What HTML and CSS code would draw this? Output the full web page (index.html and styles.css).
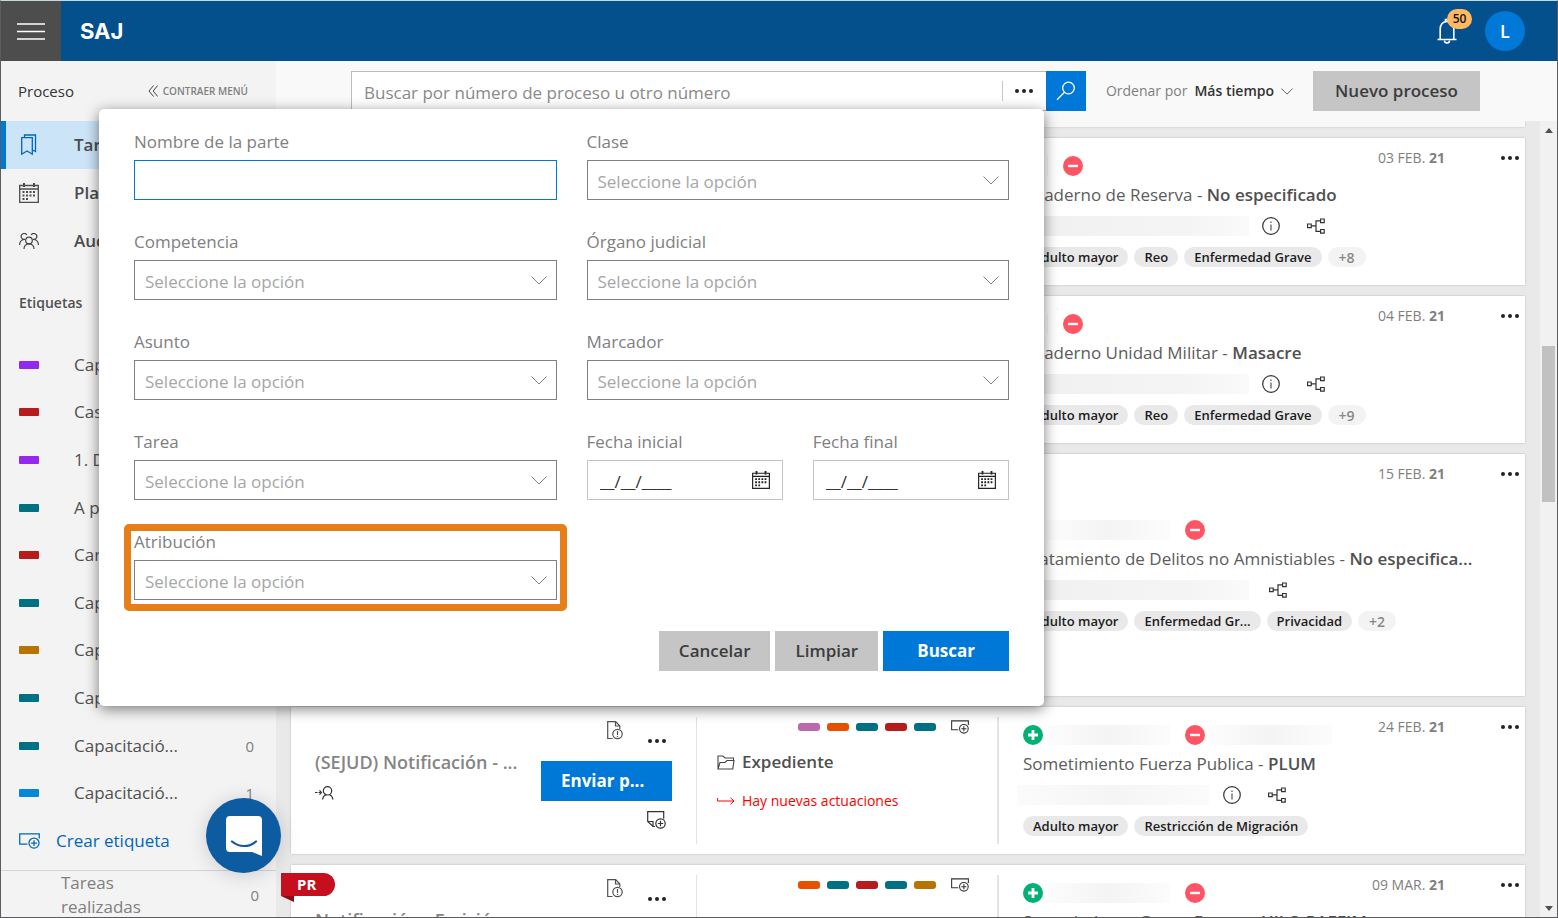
FILE: index.html
```html
<!DOCTYPE html>
<html lang="es">
<head>
<meta charset="utf-8">
<meta name="viewport" content="width=device-width, initial-scale=1">
<title>SAJ</title>
<link rel="stylesheet" href="styles.css">
</head>
<body>
<svg class="sprite" aria-hidden="true">
  <symbol id="i-dots" viewBox="0 0 18 4"><circle cx="2" cy="2" r="2"/><circle cx="9" cy="2" r="2"/><circle cx="16" cy="2" r="2"/></symbol>
  <symbol id="i-chevron" viewBox="0 0 16 9"><path d="M.5.5 8 8 15.500.5" fill="none" stroke="currentColor"/></symbol>
  <symbol id="i-calendar" viewBox="0 0 20 20"><path d="M.7 2.500h18.600v16.800H.7zM.7 6h18.600" fill="none" stroke="currentColor" stroke-width="1.300"/><path d="M4 0h2v4H4zM14 0h2v4h-2zM7 8h2v2H7zm3.500 0h2v2h-2zM14 8h2v2h-2zM3.500 8h2v2h-2zm0 3.500h2v2h-2zm3.500 0h2v2H7zm3.500 0h2v2h-2zm3.500 0h2v2h-2zM3.500 15h2v2h-2zM7 15h2v2H7z" fill="currentColor"/></symbol>
  <symbol id="i-minus" viewBox="0 0 20 20"><circle cx="10" cy="10" r="10" fill="#ff5464"/><path d="M5 10h10" stroke="#fff" stroke-width="2.400"/></symbol>
  <symbol id="i-plus" viewBox="0 0 20 20"><circle cx="10" cy="10" r="10" fill="#00b074"/><path d="M5 10h10M10 5v10" stroke="#fff" stroke-width="2.800"/></symbol>
  <symbol id="i-info" viewBox="0 0 18 18"><circle cx="9" cy="9" r="8.300" fill="none" stroke="currentColor" stroke-width="1.200"/><path d="M9 7.500v6M9 4.500v1.500" stroke="currentColor"/></symbol>
  <symbol id="i-tree" viewBox="0 0 18 16"><path d="M.6 6h3.600v3.600H.6zM13.600 1h3.600v3.600h-3.600zM13.600 11.500h3.600v3.600h-3.600zM4.200 7.800H9M13.600 2.800H9v10.500h4.600" fill="none" stroke="currentColor" stroke-width="1.200"/></symbol>
  <symbol id="i-doc" viewBox="0 0 16 19"><path d="M5.500 17.500H.7V.7h8L12.800 5v3M8.500.7V5h4.300" fill="none" stroke="currentColor" stroke-width="1.200"/><circle cx="10.500" cy="13" r="4.700" fill="none" stroke="currentColor" stroke-width="1.200"/><path d="M10.500 10v4M10.500 15v1" stroke="currentColor" stroke-width="1.200"/></symbol>
  <symbol id="i-note" viewBox="0 0 19 18"><path d="M8 15.500H6L.7 10.500V.7h16v7M.7 10.500H6v5" fill="none" stroke="currentColor" stroke-width="1.200"/><circle cx="13.500" cy="12.500" r="4.700" fill="none" stroke="currentColor" stroke-width="1.200"/><path d="M10.800 12.500h5.400M13.500 9.800v5.400" stroke="currentColor" stroke-width="1.200"/></symbol>
  <symbol id="i-tag" viewBox="0 0 20 15"><path d="M8 10.500H.7V.7h18.600v4.500" fill="none" stroke="currentColor" stroke-width="1.200"/><circle cx="14.300" cy="9.500" r="4.800" fill="none" stroke="currentColor" stroke-width="1.200"/><path d="M11.500 9.500h5.600M14.300 6.700v5.600" stroke="currentColor" stroke-width="1.200"/></symbol>
</svg>

<header class="topbar">
  <button class="menu-btn" aria-label="Menú"><svg width="28" height="17" viewBox="0 0 28 17"><path d="M0 1h28M0 8.500h28M0 16h28" stroke="#fff" stroke-width="1.600"/></svg></button>
  <span class="logo">SAJ</span>
  <button class="bell" aria-label="Notificaciones">
    <svg width="20" height="26" viewBox="0 0 20 26"><path d="M.5 21.500h19M3.200 21.500V11C3.200 6.500 6 3.500 10 3.500s6.800 3 6.800 7.500v10.500M8.500 3.500V1.500h3v2" fill="none" stroke="#fff" stroke-width="1.600"/><path d="M7.500 22.500a2.500 2.500 0 0 0 5 0" fill="none" stroke="#fff" stroke-width="1.600"/></svg>
    <span class="badge">50</span>
  </button>
  <button class="avatar">L</button>
</header>

<div class="shell">
  <aside class="sidebar">
    <div class="side-head">
      <span>Proceso</span>
      <button class="collapse"><svg width="10" height="12" viewBox="0 0 10 12"><path d="M5.500.5 1 6l4.500 5.500M9.700.5 5.200 6l4.500 5.500" fill="none" stroke="#444"/></svg>CONTRAER MENÚ</button>
    </div>
    <nav class="side-nav">
      <a class="active" href="#"><svg width="20" height="22" viewBox="0 0 20 22"><path d="M2.700 3.700h10.600v16.500L8 17l-5.300 3.200zM5.500 3.500V1h11v16.500l-3-1.500" fill="none" stroke="#0067b8" stroke-width="1.300"/></svg>Tareas</a>
      <a href="#"><svg width="20" height="20"><use href="#i-calendar"/></svg>Plazos</a>
      <a href="#"><svg width="20" height="17" viewBox="0 0 20 17"><g fill="none" stroke="#444" stroke-width="1.200"><circle cx="10" cy="7.500" r="3.300"/><path d="M5 16c0-3 2.200-5.200 5-5.200s5 2.200 5 5.200"/><path d="M6 6.300A3 3 0 1 1 7.800 2M14 6.300A3 3 0 1 0 12.200 2M.6 12c0-2.800 1.700-5 4.400-5.500M19.400 12c0-2.800-1.700-5-4.400-5.500"/></g></svg>Audiencias</a>
    </nav>
    <h2 class="side-title">Etiquetas</h2>
    <ul class="tags">
      <li><i class="swatch violet"></i><span>Capacitación</span></li>
      <li><i class="swatch red"></i><span>Casos</span></li>
      <li><i class="swatch violet"></i><span>1. Derecho</span></li>
      <li><i class="swatch teal"></i><span>A prueba</span></li>
      <li><i class="swatch red"></i><span>Carpeta</span></li>
      <li><i class="swatch teal"></i><span>Capacitació...</span></li>
      <li><i class="swatch ochre"></i><span>Capacitació...</span></li>
      <li><i class="swatch teal"></i><span>Capacitació...</span></li>
      <li><i class="swatch teal"></i><span>Capacitació...</span><b>0</b></li>
      <li><i class="swatch blue"></i><span>Capacitació...</span><b>1</b></li>
    </ul>
    <a class="create" href="#"><svg width="21" height="16"><use href="#i-tag"/></svg>Crear etiqueta</a>
    <div class="side-foot"><span>Tareas<br>realizadas</span><b>0</b></div>
  </aside>

  <main class="content">
    <div class="toolbar">
      <form class="search">
        <input type="text" aria-label="Buscar" placeholder="Buscar por número de proceso u otro número">
        <button type="button" class="more" aria-label="Más filtros"><svg width="18" height="4"><use href="#i-dots"/></svg></button>
        <button type="button" class="go" aria-label="Buscar"><svg width="20" height="20" viewBox="0 0 20 20"><circle cx="12.500" cy="7" r="5.800" fill="none" stroke="#fff" stroke-width="1.300"/><path d="M8.500 11.200 1 18.800" stroke="#fff" stroke-width="1.300"/></svg></button>
      </form>
      <button class="sort"><span>Ordenar por</span> <strong>Más tiempo</strong><svg width="12" height="7"><use href="#i-chevron"/></svg></button>
      <button class="btn new">Nuevo proceso</button>
    </div>

    <div class="board">
      <div class="list">
        <article class="card stub"></article>

        <article class="card">
          <section class="task"></section>
          <section class="file"></section>
          <section class="info">
            <div class="details">
              <div class="row parties"><svg width="20" height="20"><use href="#i-plus"/></svg><span class="redact none"></span><svg width="20" height="20"><use href="#i-minus"/></svg></div>
              <h3>Cuaderno de Reserva - <b>No especificado</b></h3>
              <div class="row ids"><span class="redact id"></span><svg width="18" height="18"><use href="#i-info"/></svg><svg width="18" height="16"><use href="#i-tree"/></svg></div>
              <div class="row pills"><span>Adulto mayor</span><span>Reo</span><span>Enfermedad Grave</span><em>+8</em></div>
            </div>
            <div class="corner"><time>03 FEB. <b>21</b></time><button aria-label="Más"><svg width="18" height="4"><use href="#i-dots"/></svg></button></div>
          </section>
        </article>

        <article class="card">
          <section class="task"></section>
          <section class="file"></section>
          <section class="info">
            <div class="details">
              <div class="row parties"><svg width="20" height="20"><use href="#i-plus"/></svg><span class="redact none"></span><svg width="20" height="20"><use href="#i-minus"/></svg></div>
              <h3>Cuaderno Unidad Militar - <b>Masacre</b></h3>
              <div class="row ids"><span class="redact id"></span><svg width="18" height="18"><use href="#i-info"/></svg><svg width="18" height="16"><use href="#i-tree"/></svg></div>
              <div class="row pills"><span>Adulto mayor</span><span>Reo</span><span>Enfermedad Grave</span><em>+9</em></div>
            </div>
            <div class="corner"><time>04 FEB. <b>21</b></time><button aria-label="Más"><svg width="18" height="4"><use href="#i-dots"/></svg></button></div>
          </section>
        </article>

        <article class="card tall">
          <section class="task"></section>
          <section class="file"></section>
          <section class="info">
            <div class="details">
              <div class="row parties"><svg width="20" height="20"><use href="#i-plus"/></svg><span class="redact"></span><svg width="20" height="20"><use href="#i-minus"/></svg></div>
              <h3>Tratamiento de Delitos no Amnistiables - <b>No especifica...</b></h3>
              <div class="row ids"><span class="redact id wide"></span><svg width="18" height="16"><use href="#i-tree"/></svg></div>
              <div class="row pills"><span>Adulto mayor</span><span>Enfermedad Gr...</span><span>Privacidad</span><em>+2</em></div>
            </div>
            <div class="corner"><time>15 FEB. <b>21</b></time><button aria-label="Más"><svg width="18" height="4"><use href="#i-dots"/></svg></button></div>
          </section>
        </article>

        <article class="card">
          <section class="task">
            <div class="task-text">
              <h3>(SEJUD) Notificación - ...</h3>
              <svg width="19" height="14" viewBox="0 0 19 14"><g fill="none" stroke="#333" stroke-width="1.200"><path d="M0 6.500h2.500M3.500 6.500h2M4.500 4.300l2 2.200-2 2.200"/><circle cx="12.500" cy="4.800" r="4.200"/><path d="M7.500 13.500c.4-2.500 1.800-4 3.500-4.700M18 13.500c-.4-2.500-1.800-4-3.500-4.700"/></g></svg>
            </div>
            <div class="task-side">
              <div class="task-icons"><svg width="16" height="19"><use href="#i-doc"/></svg><button aria-label="Más"><svg width="18" height="4"><use href="#i-dots"/></svg></button></div>
              <button class="btn primary send">Enviar p...</button>
              <svg class="note" width="19" height="18"><use href="#i-note"/></svg>
            </div>
          </section>
          <section class="file">
            <div class="chips"><i class="pink"></i><i class="orange"></i><i class="teal"></i><i class="red"></i><i class="teal"></i><svg width="18" height="14"><use href="#i-tag"/></svg></div>
            <a class="expediente" href="#"><svg width="18" height="15" viewBox="0 0 18 15"><path d="M1 14V1h5l2 2h8.500v2.500M1 14l2-6.500h5l2-2h7L15.800 14z" fill="none" stroke="#444" stroke-width="1.100"/></svg>Expediente</a>
            <a class="news" href="#"><svg width="18" height="8" viewBox="0 0 18 8"><path d="M.6 1v3H17M13.500.8 17 4l-3.500 3.200" fill="none" stroke="#f00"/></svg>Hay nuevas actuaciones</a>
          </section>
          <section class="info">
            <div class="details">
              <div class="row parties"><svg width="20" height="20"><use href="#i-plus"/></svg><span class="redact"></span><svg width="20" height="20"><use href="#i-minus"/></svg><span class="redact"></span></div>
              <h3>Sometimiento Fuerza Publica - <b>PLUM</b></h3>
              <div class="row ids"><span class="redact id short"></span><svg width="18" height="18"><use href="#i-info"/></svg><svg width="18" height="16"><use href="#i-tree"/></svg></div>
              <div class="row pills"><span>Adulto mayor</span><span>Restricción de Migración</span></div>
            </div>
            <div class="corner"><time>24 FEB. <b>21</b></time><button aria-label="Más"><svg width="18" height="4"><use href="#i-dots"/></svg></button></div>
          </section>
        </article>

        <article class="card">
          <span class="ribbon">PR</span>
          <section class="task">
            <div class="task-text"><h3>Notificación - Emisió...</h3></div>
            <div class="task-side">
              <div class="task-icons"><svg width="16" height="19"><use href="#i-doc"/></svg><button aria-label="Más"><svg width="18" height="4"><use href="#i-dots"/></svg></button></div>
              <button class="btn primary send">Enviar p...</button>
              <svg class="note" width="19" height="18"><use href="#i-note"/></svg>
            </div>
          </section>
          <section class="file">
            <div class="chips"><i class="orange"></i><i class="teal"></i><i class="red"></i><i class="teal"></i><i class="ochre"></i><svg width="18" height="14"><use href="#i-tag"/></svg></div>
          </section>
          <section class="info">
            <div class="details">
              <div class="row parties"><svg width="20" height="20"><use href="#i-plus"/></svg><span class="redact"></span><svg width="20" height="20"><use href="#i-minus"/></svg></div>
              <h3>Sometimiento Grupo Fuerza - <b>UJLO PAEFIM...</b></h3>
              <div class="row ids"></div>
              <div class="row pills"></div>
            </div>
            <div class="corner"><time>09 MAR. <b>21</b></time><button aria-label="Más"><svg width="18" height="4"><use href="#i-dots"/></svg></button></div>
          </section>
        </article>
      </div>
      <div class="scroll" aria-hidden="true"><i class="up"></i><i class="thumb"></i><i class="down"></i></div>
    </div>
  </main>
</div>

<form class="filters">
  <div class="fields">
    <div class="field"><label for="nombre">Nombre de la parte</label><input id="nombre" class="focus" type="text"></div>
    <div class="field"><label for="clase">Clase</label><div class="pick"><select id="clase"><option>Seleccione la opción</option></select><svg width="16" height="9"><use href="#i-chevron"/></svg></div></div>
    <div class="field"><label for="competencia">Competencia</label><div class="pick"><select id="competencia"><option>Seleccione la opción</option></select><svg width="16" height="9"><use href="#i-chevron"/></svg></div></div>
    <div class="field"><label for="organo">Órgano judicial</label><div class="pick"><select id="organo"><option>Seleccione la opción</option></select><svg width="16" height="9"><use href="#i-chevron"/></svg></div></div>
    <div class="field"><label for="asunto">Asunto</label><div class="pick"><select id="asunto"><option>Seleccione la opción</option></select><svg width="16" height="9"><use href="#i-chevron"/></svg></div></div>
    <div class="field"><label for="marcador">Marcador</label><div class="pick"><select id="marcador"><option>Seleccione la opción</option></select><svg width="16" height="9"><use href="#i-chevron"/></svg></div></div>
    <div class="field"><label for="tarea">Tarea</label><div class="pick"><select id="tarea"><option>Seleccione la opción</option></select><svg width="16" height="9"><use href="#i-chevron"/></svg></div></div>
    <div class="dates">
      <div class="field"><label for="inicio">Fecha inicial</label><div class="pick date"><input id="inicio" type="text" value="__/__/____"><svg width="18" height="18"><use href="#i-calendar"/></svg></div></div>
      <div class="field"><label for="fin">Fecha final</label><div class="pick date"><input id="fin" type="text" value="__/__/____"><svg width="18" height="18"><use href="#i-calendar"/></svg></div></div>
    </div>
    <div class="field highlight"><label for="atribucion">Atribución</label><div class="pick"><select id="atribucion"><option>Seleccione la opción</option></select><svg width="16" height="9"><use href="#i-chevron"/></svg></div></div>
  </div>
  <div class="actions">
    <button type="button" class="btn">Cancelar</button>
    <button type="button" class="btn">Limpiar</button>
    <button type="button" class="btn primary find">Buscar</button>
  </div>
</form>

<button class="chat" aria-label="Chat"><svg width="36" height="40" viewBox="0 0 36 40"><path d="M4 0h28a4 4 0 0 1 4 4v36l-10-4H4a4 4 0 0 1-4-4V4a4 4 0 0 1 4-4z" fill="#fff"/><path d="M6 25.500c7 6 17 6 24 0" fill="none" stroke="#0d5ba1" stroke-width="2.200" stroke-linecap="round"/></svg></button>
</body>
</html>
```
FILE: styles.css
```css
* { box-sizing: border-box; }

body {
  margin: 0;
  height: 100vh;
  display: flex;
  flex-direction: column;
  position: relative;
  overflow: hidden;
  border: 1px solid #5c5c5e;
  border-top-color: #c9d8dc;
  font-family: "Open Sans", "Noto Sans", sans-serif;
  font-size: 17px;
  line-height: 24px;
  color: #505050;
  background: #f3f3f3;
}

button, input, select { font: inherit; color: inherit; border: 0; border-radius: 0; padding: 0; background: none; }
a { color: inherit; text-decoration: none; }
h2, h3, ul { margin: 0; padding: 0; font-size: inherit; font-weight: 400; }
svg { flex: none; display: block; }
.sprite { position: absolute; width: 0; height: 0; }

/* Top bar */
.topbar { display: flex; align-items: center; height: 60px; flex: none; background: #04508c; padding-right: 32px; }
.menu-btn { width: 60px; height: 60px; background: #4d4d4d; display: grid; place-items: center; }
.logo { margin: 0 auto 0 19px; font: 700 22px/24px Inter, sans-serif; color: #fff; }
.bell { position: relative; margin-right: 28px; }
.badge { position: absolute; top: -9px; left: 10px; min-width: 25px; height: 20px; border-radius: 10px; background: #ffb961; color: #111; font-size: 12px; line-height: 20px; font-weight: 600; text-align: center; }
.avatar { width: 40px; height: 40px; border-radius: 50%; background: #0078d7; color: #fff; font-weight: 600; font-size: 18px; }

.shell { flex: 1; min-height: 0; display: flex; }

/* Sidebar */
.sidebar { width: 275px; flex: none; display: flex; flex-direction: column; }
.side-head { height: 60px; display: flex; align-items: center; justify-content: space-between; padding: 0 28px 0 17px; font-size: 15px; color: #333; }
.collapse { display: flex; align-items: center; gap: 5px; font-size: 10px; font-weight: 600; color: #808080; }
.side-nav a { height: 48px; display: flex; align-items: center; gap: 35px; padding-left: 18px; font-weight: 600; color: #4c4c4c; }
.side-nav .active { background: #cce4f7; border-left: 5px solid #0078d7; padding-left: 13px; }
.side-title { height: 76px; padding-left: 18px; line-height: 76px; font-size: 14px; font-weight: 600; }
.tags { flex: 1; display: grid; grid-auto-rows: 1fr; list-style: none; }
.tags li { display: flex; align-items: center; padding: 0 22px 0 18px; }
.tags span { margin: 0 auto 0 35px; }
.tags b, .side-foot b { font-weight: 400; font-size: 15px; color: #808080; }
.swatch { width: 20px; height: 8px; border-radius: 1px; }
.violet { background: #9428ee; }
.red { background: #b71c1c; }
.teal { background: #007083; }
.ochre { background: #b87400; }
.blue { background: #0288d7; }
.pink { background: #bb69ab; }
.orange { background: #e65100; }
.create { display: flex; align-items: center; gap: 16px; height: 48px; padding-left: 18px; color: #0067b8; }
.side-foot { height: 52px; padding: 8px 17px 0 60px; display: flex; align-items: center; justify-content: space-between; color: #808080; background: linear-gradient(#d4d4d4, #d4d4d4) 0 5px / 100% 1px no-repeat; }

/* Toolbar */
.content { flex: 1; min-width: 0; display: flex; flex-direction: column; }
.toolbar { height: 60px; flex: none; display: flex; align-items: center; background: #f9f9f9; padding: 0 77px 0 75px; }
.search { flex: 1; display: flex; height: 40px; border: 1px solid #bcbcbc; border-right: 0; background: #fff; }
.search input { flex: 1; min-width: 0; padding: 3px 12px 0; outline: 0; }
.search input::placeholder { color: #8a8a8a; opacity: 1; }
.more { width: 44px; display: grid; place-items: center; color: #222; margin: 9px 0; border-left: 1px solid #c8c8c8; }
.more svg { fill: #222; }
.go { width: 40px; margin: -1px 0; background: #0078d7; display: grid; place-items: center; }
.sort { display: flex; align-items: center; gap: 7px; margin: 0 20px; font-size: 14px; color: #333; }
.sort span { color: #808080; }
.sort strong { font-weight: 600; }
.btn { height: 40px; padding: 0 20px; background: #c5c5c5; color: #3c3c3c; font-weight: 600; white-space: nowrap; }
.new { padding: 0 22px; }
.primary { background: #0078d7; color: #fff; font-weight: 700; }

/* Board */
.board { flex: 1; min-height: 0; display: flex; background: #e9e9e9; }
.list { flex: 1; min-width: 0; display: flex; flex-direction: column; gap: 11px; padding: 0 15px; overflow: hidden; }
.card { position: relative; flex: none; min-height: 147px; display: grid; grid-template-columns: 405px 301px minmax(0, 1fr); background: #fff; box-shadow: 0 0 2px rgba(0, 0, 0, .22); padding: 10px 0; }
.card.stub { min-height: 6px; padding: 0; background: #f8f8f8; }
.card.tall { min-height: 242px; }

.task { display: flex; justify-content: space-between; padding: 0 24px; }
.task-text { padding-top: 33px; }
.task-text h3 { font-size: 18px; font-weight: 600; color: #858585; margin-bottom: 12px; white-space: nowrap; }
.task-side { width: 131px; }
.task-icons { display: flex; justify-content: space-between; height: 44px; padding: 4px 6px 0 66px; }
.task-icons button { align-self: start; padding-top: 18px; }
.task-icons button svg, .corner svg { fill: #222; }
.send { width: 100%; text-align: left; }
.note { margin: 10px 6px 0 auto; color: #333; }

.file { border-left: 1px solid #e2e2e2; padding: 3px 28px 0 20px; }
.chips { display: flex; align-items: center; justify-content: flex-end; gap: 7px; height: 14px; color: #333; }
.chips i { width: 22px; height: 8px; border-radius: 3px; }
.chips svg { margin-left: 8px; }
.expediente { display: flex; align-items: center; gap: 7px; margin-top: 16px; font-weight: 600; }
.news { display: flex; align-items: center; gap: 7px; margin-top: 15px; font-size: 14px; color: #f00; }

.info { display: grid; align-items: center; border-left: 2px solid #e4e4e4; padding-left: 24px; }
.details { grid-area: 1 / 1; min-width: 0; }
.details h3 { margin: 7px 0 9px; white-space: nowrap; color: #5c5c5c; }
.details h3 b { font-weight: 600; color: #505050; }
.row { display: flex; align-items: center; height: 20px; }
.redact { width: 123px; height: 20px; margin: 0 15px 0 4px; background: linear-gradient(90deg, #fcfcfc, #f4f4f4 50%, #fcfcfc); }
.redact.none { width: 1px; }
.redact.id { width: 226px; margin: 0 13px 0 0; background: linear-gradient(90deg, #f0f0f0, #f4f4f4 70%, #fafafa); }
.redact.id.wide { margin-right: 20px; }
.redact.id.short { width: 192px; margin: 0 14px 0 -6px; background: linear-gradient(90deg, #fbfbfb, #f5f5f5 50%, #fbfbfb); }
.ids { color: #333; }
.ids svg + svg { margin-left: 27px; }
.pills { gap: 6px; margin-top: 11px; }
.pills span, .pills em { height: 20px; border-radius: 10px; padding: 0 10px; background: #e9e9e9; color: #1c1c1c; font-size: 13px; line-height: 21px; font-weight: 600; font-style: normal; white-space: nowrap; }
.pills em { background: #f3f3f3; color: #888; font-size: 14px; padding: 0 11px; }
.corner { grid-area: 1 / 1; align-self: start; justify-self: end; display: flex; gap: 56px; padding-right: 6px; font-size: 14px; line-height: 20px; color: #808080; }
.corner button { align-self: center; }

.ribbon { position: absolute; left: -10px; top: 8px; width: 54px; height: 23px; border-radius: 0 12px 12px 0; background: #c50f1f; color: #fff; font-size: 15px; line-height: 23px; font-weight: 700; padding-left: 16px; }
.ribbon::after { content: ""; position: absolute; left: 0; top: 23px; border: 6px solid transparent; border-width: 0 13px 6px 0; border-right-color: #8e0b16; }

/* Scrollbar */
.scroll { width: 17px; display: flex; flex-direction: column; align-items: center; background: #f1f1f1; padding: 7px 0 6px; }
.thumb { width: 13px; flex: 156; background: #c1c1c1; }
.up, .down { width: 0; border: 4px solid transparent; }
.up { border-top: 0; border-bottom: 5px solid #505050; }
.down { border-bottom: 0; border-top: 5px solid #505050; }
.scroll::before, .scroll::after { content: ""; }
.scroll::before { flex: 213; order: 1; }
.scroll::after { flex: 405; order: 3; }
.thumb { order: 2; }
.up { order: 0; }
.down { order: 4; }

/* Filter popup */
.filters { position: absolute; left: 98px; right: 513px; top: 108px; padding: 21px 35px 35px; background: #fff; border-radius: 5px; box-shadow: 0 3px 14px rgba(0, 0, 0, .5); color: #808080; }
.fields { display: grid; grid-template-columns: 1fr 1fr; gap: 30px; }
.field { position: relative; }
.field label { display: block; margin-bottom: 6px; }
.field > input, .pick select, .pick input { display: block; width: 100%; height: 40px; border: 1px solid #808080; background: #fff; outline: 0; }
.field > input.focus { border-color: #0078d7; }
.pick { display: grid; align-items: center; }
.pick > * { grid-area: 1 / 1; }
.pick svg { justify-self: end; margin-right: 10px; pointer-events: none; }
.pick select { appearance: none; color: #a6a6a6; padding: 3px 10px 0; }
.dates { display: grid; grid-template-columns: 1fr 1fr; gap: 30px; }
.pick.date input { border-color: #c4c4c4; color: #333; padding: 3px 12px 0; }
.pick.date svg { margin-right: 13px; color: #222; }
.highlight::after { content: ""; position: absolute; inset: -6px -10px -11px; border: 7px solid #e67e1a; border-radius: 5px; pointer-events: none; }
.actions { display: flex; justify-content: flex-end; gap: 5px; margin-top: 31px; }
.find { padding: 0 34px; }

.chat { position: absolute; left: 205px; bottom: 44px; width: 75px; height: 75px; border-radius: 50%; background: #0d5ba1; display: grid; place-items: center; box-shadow: 0 2px 20px rgba(0, 0, 0, .16); }
```
